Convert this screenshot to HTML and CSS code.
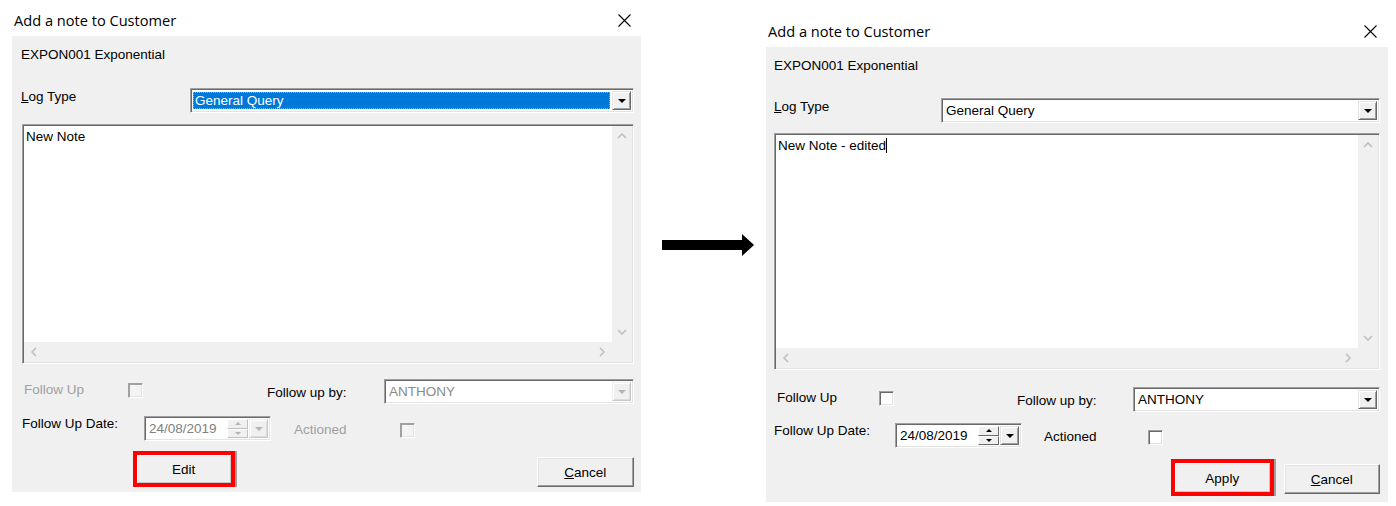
FILE: index.html
```html
<!DOCTYPE html>
<html>
<head>
<meta charset="utf-8">
<title>Add a note to Customer</title>
<link rel="stylesheet" href="styles.css">
</head>
<body>
<div class="page">
  <section class="window win-left">
    <header class="titlebar">
      <span class="title">Add a note to Customer</span>
      <svg class="close" width="13" height="13" viewBox="0 0 13 13"><path d="M0.5 0.5 L12.5 12.5 M12.5 0.5 L0.5 12.5" stroke="#000" stroke-width="1.1" fill="none"/></svg>
    </header>
    <div class="body">
      <div class="cust">EXPON001 Exponential</div>
      <div class="row-log">
        <span class="lbl"><u>L</u>og Type</span>
        <div class="combo">
          <span class="combo-text sel">General Query</span>
          <span class="ddbtn"><i class="tri"></i></span>
        </div>
      </div>
      <div class="memo">
        <div class="memo-text">New Note</div>
        <div class="vscroll">
          <span class="sbtn"><svg width="10" height="6" viewBox="0 0 10 6"><polyline points="1,5 5,1 9,5" class="chev"/></svg></span>
          <span class="sbtn"><svg width="10" height="6" viewBox="0 0 10 6"><polyline points="1,1 5,5 9,1" class="chev"/></svg></span>
        </div>
        <div class="hscroll">
          <span class="sbtn"><svg width="6" height="10" viewBox="0 0 6 10"><polyline points="5,1 1,5 5,9" class="chev"/></svg></span>
          <span class="sbtn"><svg width="6" height="10" viewBox="0 0 6 10"><polyline points="1,1 5,5 1,9" class="chev"/></svg></span>
        </div>
        <div class="corner"></div>
      </div>
      <div class="row-fu">
        <span class="lbl lbl-fu dis">Follow Up</span>
        <span class="check dis"></span>
        <span></span>
        <span class="lbl lbl-by">Follow up by:</span>
        <div class="combo dis">
          <span class="combo-text">ANTHONY</span>
          <span class="ddbtn"><i class="tri"></i></span>
        </div>
      </div>
      <div class="row-date">
        <span class="lbl lbl-date">Follow Up Date:</span>
        <div class="picker dis">
          <span class="picker-text">24/08/2019</span>
          <span class="spin"><span class="spin-btn"><i class="tri-up"></i></span><span class="spin-btn"><i class="tri-dn"></i></span></span>
          <span class="ddbtn"><i class="tri"></i></span>
        </div>
        <span></span>
        <span class="lbl lbl-act dis">Actioned</span>
        <span class="check dis"></span>
      </div>
      <div class="row-btn">
        <button class="btn hl">Edit</button>
        <button class="btn cancel"><u>C</u>ancel</button>
      </div>
    </div>
  </section>

  <svg class="arrow" width="92" height="22" viewBox="0 0 92 22"><rect x="0" y="6" width="81" height="10" fill="#000"/><polygon points="80,0 92,11 80,22" fill="#000"/></svg>

  <section class="window win-right">
    <header class="titlebar">
      <span class="title">Add a note to Customer</span>
      <svg class="close" width="13" height="13" viewBox="0 0 13 13"><path d="M0.5 0.5 L12.5 12.5 M12.5 0.5 L0.5 12.5" stroke="#000" stroke-width="1.1" fill="none"/></svg>
    </header>
    <div class="body">
      <div class="cust">EXPON001 Exponential</div>
      <div class="row-log">
        <span class="lbl"><u>L</u>og Type</span>
        <div class="combo">
          <span class="combo-text">General Query</span>
          <span class="ddbtn"><i class="tri"></i></span>
        </div>
      </div>
      <div class="memo">
        <div class="memo-text">New Note - edited<span class="caret"></span></div>
        <div class="vscroll">
          <span class="sbtn"><svg width="10" height="6" viewBox="0 0 10 6"><polyline points="1,5 5,1 9,5" class="chev"/></svg></span>
          <span class="sbtn"><svg width="10" height="6" viewBox="0 0 10 6"><polyline points="1,1 5,5 9,1" class="chev"/></svg></span>
        </div>
        <div class="hscroll">
          <span class="sbtn"><svg width="6" height="10" viewBox="0 0 6 10"><polyline points="5,1 1,5 5,9" class="chev"/></svg></span>
          <span class="sbtn"><svg width="6" height="10" viewBox="0 0 6 10"><polyline points="1,1 5,5 1,9" class="chev"/></svg></span>
        </div>
        <div class="corner"></div>
      </div>
      <div class="row-fu">
        <span class="lbl lbl-fu">Follow Up</span>
        <span class="check"></span>
        <span></span>
        <span class="lbl lbl-by">Follow up by:</span>
        <div class="combo">
          <span class="combo-text">ANTHONY</span>
          <span class="ddbtn"><i class="tri"></i></span>
        </div>
      </div>
      <div class="row-date">
        <span class="lbl lbl-date">Follow Up Date:</span>
        <div class="picker">
          <span class="picker-text">24/08/2019</span>
          <span class="spin"><span class="spin-btn"><i class="tri-up"></i></span><span class="spin-btn"><i class="tri-dn"></i></span></span>
          <span class="ddbtn"><i class="tri"></i></span>
        </div>
        <span></span>
        <span class="lbl lbl-act">Actioned</span>
        <span class="check"></span>
      </div>
      <div class="row-btn">
        <button class="btn hl">Apply</button>
        <button class="btn cancel"><u>C</u>ancel</button>
      </div>
    </div>
  </section>
</div>
</body>
</html>
```
FILE: styles.css
```css
html, body {
  margin: 0;
  padding: 0;
  background: #fff;
}

.page {
  display: flex;
  align-items: flex-start;
  width: 1396px;
  height: 506px;
  overflow: hidden;
  font-family: "Liberation Sans", Arial, sans-serif;
  font-size: 13.5px;
  color: #000;
}

/* per-window metrics */
.win-left {
  --ww: 641px; --bw: 629px; --bh: 456px; --pl: 9px; --pr: 7px;
  --log-mt: 25px; --log-col: 169px;
  --memo-mt: 11px; --memo-h: 240px; --memo-ml: 1px;
  --fu-mt: 15px; --fu-cols: 104px 16px 123px 117px 1fr; --fu-pl: 3px;
  --dt-mt: 12px; --dt-cols: 122px 127px 23px 106px 15px; --dt-pl: 1px;
  --bt-mt: 10px; --bt-ml: 112px; --bt-gap: 302px;
  --hl-w: 102px; --hl-h: 36px; --hl-b: 4px;
  --cn-w: 98px; --cn-mb: 0px;
  --x-mr: 10px;
}

.win-right {
  margin-top: 11px;
  --ww: 634px; --bw: 622px; --bh: 455px; --pl: 8px; --pr: 8px;
  --log-mt: 24px; --log-col: 167px;
  --memo-mt: 10px; --memo-h: 237px; --memo-ml: 0px;
  --fu-mt: 17px; --fu-cols: 102px 16px 122px 116px 1fr; --fu-pl: 3px;
  --dt-mt: 11px; --dt-cols: 121px 127px 22px 104px 15px; --dt-pl: 0px;
  --bt-mt: 11px; --bt-ml: 397px; --bt-gap: 10px;
  --hl-w: 103px; --hl-h: 37px; --hl-b: 4px;
  --cn-w: 97px; --cn-mb: 2px;
  --x-mr: 11px;
}

.window {
  width: var(--ww);
  flex: none;
}

.titlebar {
  height: 36px;
  display: flex;
  align-items: center;
  padding-left: 14px;
  padding-right: var(--x-mr);
  box-sizing: border-box;
  background: #fff;
}

.title {
  font-family: "Open Sans", "Noto Sans", sans-serif;
  font-size: 14.6px;
  color: #000;
  margin-top: 4px;
}

.close {
  margin-left: auto;
  margin-top: 4px;
}

.body {
  margin-left: 12px;
  width: var(--bw);
  height: var(--bh);
  box-sizing: border-box;
  padding: 0 var(--pr) 0 var(--pl);
  background: #f0f0f0;
  display: flex;
  flex-direction: column;
}

.lbl {
  line-height: 16px;
  white-space: nowrap;
}

.dis.lbl, .lbl.dis {
  color: #a0a0a0;
}

.cust {
  margin-top: 11px;
  line-height: 16px;
}

/* Log type row */
.row-log {
  margin-top: var(--log-mt);
  display: grid;
  grid-template-columns: var(--log-col) 1fr;
  align-items: start;
  height: 25px;
}

.row-log .lbl {
  margin-top: 1px;
}

/* sunken field */
.combo, .picker {
  height: 25px;
  box-sizing: border-box;
  border: 1px solid;
  border-color: #a0a0a0 #fff #fff #a0a0a0;
  box-shadow: inset 1px 1px #696969, inset -1px -1px #e3e3e3;
  background: #fff;
  padding: 2px 2px 2px 2px;
  display: flex;
}

.combo-text {
  flex: 1;
  line-height: 19px;
  padding-left: 2px;
  white-space: nowrap;
}

.combo-text.sel {
  background: #0078d7;
  color: #fff;
  outline: 1px dotted #e0a040;
  outline-offset: -1px;
  margin: 1px 2px 1px 0;
  line-height: 17px;
}

.combo.dis .combo-text {
  color: #8a8a8a;
}

.ddbtn {
  width: 19px;
  flex: none;
  box-sizing: border-box;
  background: #f0f0f0;
  border: 1px solid;
  border-color: #e3e3e3 #696969 #696969 #e3e3e3;
  box-shadow: inset 1px 1px #fff, inset -1px -1px #a0a0a0;
  display: flex;
  align-items: center;
  justify-content: center;
}

.tri {
  width: 0;
  height: 0;
  border-left: 4px solid transparent;
  border-right: 4px solid transparent;
  border-top: 4px solid #000;
  margin-top: 1px;
}

.dis .ddbtn {
  border-color: #f0f0f0 #c8c8c8 #c8c8c8 #f0f0f0;
  box-shadow: inset 1px 1px #fff, inset -1px -1px #dcdcdc;
}

.dis .tri {
  border-top-color: #b4b4b4;
}

/* memo */
.memo {
  margin-top: var(--memo-mt);
  margin-left: var(--memo-ml);
  height: var(--memo-h);
  box-sizing: border-box;
  border: 1px solid;
  border-color: #a0a0a0 #fff #fff #a0a0a0;
  box-shadow: inset 1px 1px #696969, inset -1px -1px #e3e3e3;
  padding: 1px 1px 1px 1px;
  display: grid;
  grid-template-columns: 1fr 20px;
  grid-template-rows: 1fr 20px;
}

.memo-text {
  background: #fff;
  padding: 3px 2px 1px;
  line-height: 16px;
  white-space: nowrap;
}

.caret {
  display: inline-block;
  width: 1px;
  height: 15px;
  background: #000;
  vertical-align: -3px;
}

.vscroll {
  background: #f0f0f0;
  display: flex;
  flex-direction: column;
  justify-content: space-between;
}

.hscroll {
  background: #f0f0f0;
  display: flex;
  justify-content: space-between;
}

.corner {
  background: #f0f0f0;
}

.sbtn {
  width: 20px;
  height: 20px;
  display: flex;
  align-items: center;
  justify-content: center;
}

.chev {
  fill: none;
  stroke: #bdbdbd;
  stroke-width: 1.5;
}

/* follow up row */
.row-fu {
  margin-top: var(--fu-mt);
  padding-left: var(--fu-pl);
  display: grid;
  grid-template-columns: var(--fu-cols);
  align-items: center;
  height: 25px;
}

.lbl-fu {
  margin-bottom: 3px;
}

.lbl-by {
  margin-top: 3px;
}

.check {
  width: 15px;
  height: 15px;
  box-sizing: border-box;
  border: 1px solid;
  border-color: #a0a0a0 #fff #fff #a0a0a0;
  box-shadow: inset 1px 1px #696969, inset -1px -1px #e3e3e3;
  background: #fff;
}

.check.dis {
  background: #f4f4f4;
  box-shadow: inset 1px 1px #a0a0a0, inset -1px -1px #e3e3e3;
}

.row-fu .check {
  margin-bottom: 2px;
}

/* date row */
.row-date {
  margin-top: var(--dt-mt);
  padding-left: var(--dt-pl);
  display: grid;
  grid-template-columns: var(--dt-cols);
  align-items: center;
  height: 25px;
}

.lbl-date {
  align-self: start;
}

.lbl-act {
  margin-top: 3px;
}

.row-date .check {
  margin-top: 4px;
}

.picker-text {
  flex: 1;
  line-height: 19px;
  padding-left: 2px;
  white-space: nowrap;
}

.picker.dis .picker-text {
  color: #808080;
}

.spin {
  width: 21px;
  flex: none;
  display: flex;
  flex-direction: column;
}

.spin-btn {
  flex: 1;
  box-sizing: border-box;
  background: #f0f0f0;
  border: 1px solid;
  border-color: #fff #696969 #696969 #fff;
  display: flex;
  align-items: center;
  justify-content: center;
}

.tri-up, .tri-dn {
  width: 0;
  height: 0;
  border-left: 3px solid transparent;
  border-right: 3px solid transparent;
}

.tri-up {
  border-bottom: 3px solid #000;
}

.tri-dn {
  border-top: 3px solid #000;
}

.picker.dis .spin-btn {
  border-color: #fff #c0c0c0 #c0c0c0 #fff;
}

.picker.dis .tri-up {
  border-bottom-color: #b4b4b4;
}

.picker.dis .tri-dn {
  border-top-color: #b4b4b4;
}

.picker .ddbtn {
  margin-left: 1px;
}

/* buttons */
.row-btn {
  margin-top: var(--bt-mt);
  padding-left: var(--bt-ml);
  display: flex;
  align-items: flex-end;
  gap: var(--bt-gap);
}

.btn {
  font-family: "Liberation Sans", Arial, sans-serif;
  font-size: 13.5px;
  color: #000;
  height: 30px;
  box-sizing: border-box;
  background: #f0f0f0;
  border: 1px solid;
  border-color: #fff #696969 #696969 #fff;
  box-shadow: inset -1px -1px #a0a0a0, inset 1px 1px #e3e3e3;
  padding: 0;
  margin: 0;
}

.cancel {
  width: var(--cn-w);
  margin-bottom: var(--cn-mb);
}

.btn.hl {
  width: var(--hl-w);
  height: var(--hl-h);
  border: var(--hl-b) solid #f00;
  box-shadow: 2px 0 0 #a0a0a0, inset 1px 1px #fff, inset -1px -1px #c8c8c8;
  padding-top: 1px;
}

.arrow {
  flex: none;
  margin-left: 21px;
  margin-top: 234px;
}
```
